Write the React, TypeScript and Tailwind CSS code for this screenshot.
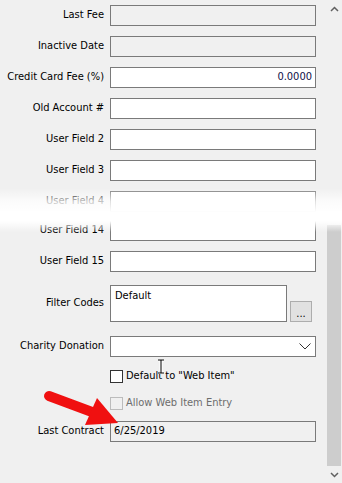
import React from "react";

const font = { fontFamily: '"DejaVu Sans Condensed", "DejaVu Sans", Tahoma, sans-serif' };

function Row({ label, children, className = "" }: { label: string; children: React.ReactNode; className?: string }) {
  return (
    <div className={"flex items-center " + className}>
      <div className="w-[104px] shrink-0 text-right pr-[0px] whitespace-nowrap">{label}</div>
      <div className="ml-[6px] flex items-start">{children}</div>
    </div>
  );
}

function Box({ ro = false, children, right = false }: { ro?: boolean; children?: React.ReactNode; right?: boolean }) {
  return (
    <div
      className={
        "w-[206px] h-[21px] border border-[#7a7a7a] flex items-center px-[3px] " +
        (ro ? "bg-[#f0f0f0] " : "bg-white ") +
        (right ? "justify-end" : "")
      }
    >
      {children}
    </div>
  );
}

export default function App() {
  return (
    <div className="relative w-[342px] h-[483px] bg-[#f0f0f0] overflow-hidden text-[11px] text-black flex" style={font}>
      <div className="flex-1 flex flex-col pt-[5px]">
        <Row label="Last Fee"><Box ro /></Row>
        <Row label="Inactive Date" className="mt-[10px]"><Box ro /></Row>
        <Row label="Credit Card Fee (%)" className="mt-[10px]"><Box right><span className="text-[#10104a]">0.0000</span></Box></Row>
        <Row label="Old Account #" className="mt-[10px]"><Box /></Row>
        <Row label="User Field 2" className="mt-[10px]"><Box /></Row>
        <Row label="User Field 3" className="mt-[10px]"><Box /></Row>
        <Row label="User Field 4" className="mt-[10px]"><Box /></Row>
        <Row label="User Field 14" className="mt-[8px]"><Box /></Row>
        <Row label="User Field 15" className="mt-[10px]"><Box /></Row>
        <Row label="Filter Codes" className="mt-[13px]">
          <div className="w-[177px] h-[37px] border border-[#7a7a7a] bg-white px-[4px] pt-[2px]">Default</div>
          <div className="ml-[3px] mt-[16px] w-[22px] h-[21px] border border-[#adadad] bg-[#e1e1e1] flex items-center justify-center text-[11px] leading-none pt-[3px]">...</div>
        </Row>
        <Row label="Charity Donation" className="mt-[14px]">
          <div className="w-[206px] h-[21px] border border-[#7a7a7a] bg-white flex items-center justify-end pr-[4px]">
            <svg width="12" height="7" viewBox="0 0 12 7"><path d="M0.5 0.5 L6 6 L11.5 0.5" fill="none" stroke="#333" strokeWidth="1" /></svg>
          </div>
        </Row>
        <div className="flex items-center mt-[13px] ml-[110px] h-[13px]">
          <div className="w-[13px] h-[13px] border border-[#333] bg-white" />
          <span className="ml-[3px]">Default to "Web Item"</span>
        </div>
        <div className="flex items-center mt-[14px] ml-[110px] h-[13px]">
          <div className="w-[13px] h-[13px] border border-[#bcbcbc] bg-[#f0f0f0]" />
          <span className="ml-[3px] text-[#6d6d6d]">Allow Web Item Entry</span>
        </div>
        <Row label="Last Contract" className="mt-[11px]"><Box ro>6/25/2019</Box></Row>
      </div>
      <div className="w-[16px] shrink-0 bg-[#f0f0f0] flex flex-col items-center">
        <div className="h-[17px] w-full flex items-center justify-center">
          <svg width="9" height="6" viewBox="0 0 9 6"><path d="M1 5 L4.5 1.5 L8 5" fill="none" stroke="#606060" strokeWidth="1.5" /></svg>
        </div>
        <div className="flex-1 w-full flex flex-col">
          <div className="h-[208px]" />
          <div className="flex-1 mx-[1px] bg-[#cdcdcd]" />
        </div>
        <div className="h-[17px] w-full flex items-center justify-center">
          <svg width="9" height="6" viewBox="0 0 9 6"><path d="M1 1 L4.5 4.5 L8 1" fill="none" stroke="#606060" strokeWidth="1.5" /></svg>
        </div>
      </div>
      <div
        className="absolute left-0 right-0 top-[188px] h-[44px] pointer-events-none"
        style={{ background: "linear-gradient(to bottom, rgba(255,255,255,0) 0%, rgba(255,255,255,0.75) 30%, rgba(255,255,255,1) 55%, rgba(255,255,255,1) 75%, rgba(255,255,255,0) 100%)" }}
      />
      <svg className="absolute left-[156px] top-[359px]" width="10" height="15" viewBox="0 0 10 15">
        <path d="M2 1 L8 1 M5 1 L5 14 M2 14 L8 14" stroke="#fff" strokeWidth="3" fill="none" />
        <path d="M2 1 L8 1 M5 1 L5 14 M2 14 L8 14" stroke="#000" strokeWidth="1" fill="none" />
      </svg>
      <svg className="absolute left-0 top-[380px]" width="130" height="50" viewBox="0 380 130 50">
        <line x1="49" y1="396" x2="92" y2="412" stroke="#f01010" strokeWidth="10" strokeLinecap="round" />
        <polygon points="97,398 85,425 118,423" fill="#f01010" />
      </svg>
    </div>
  );
}
